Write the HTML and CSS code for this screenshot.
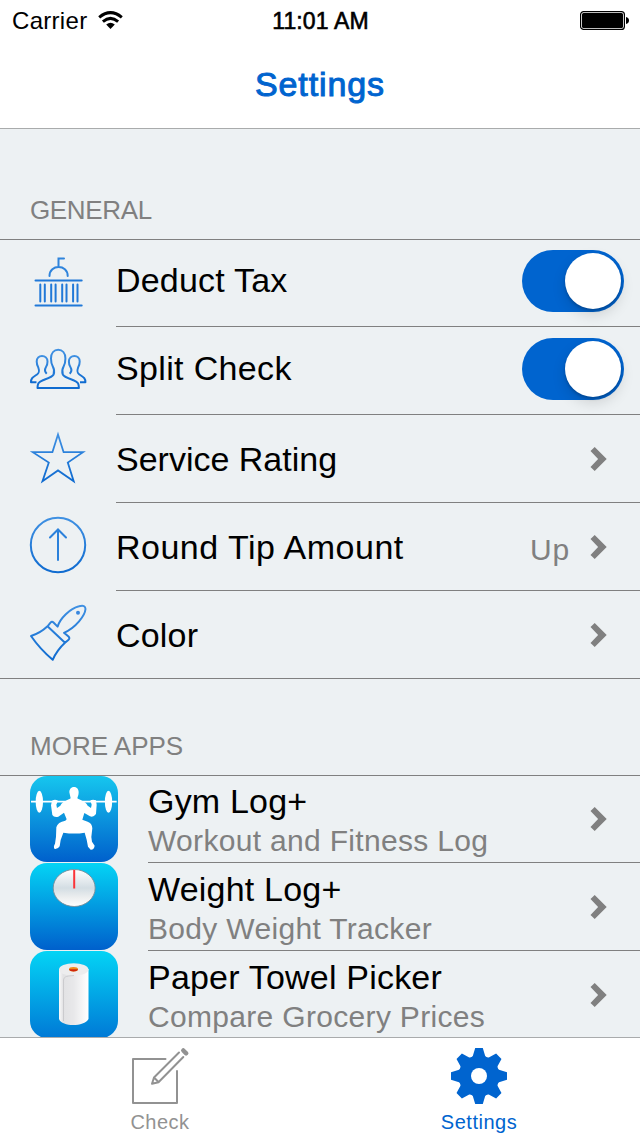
FILE: index.html
```html
<!DOCTYPE html>
<html lang="en">
<head>
<meta charset="utf-8">
<title>Settings</title>
<link rel="stylesheet" href="styles.css">
</head>
<body>
<svg class="defs" width="0" height="0">
  <defs>
    <linearGradient id="line" x1="0" y1="0" x2="0" y2="1"><stop offset="0" stop-color="#3f90e2"/><stop offset="1" stop-color="#0f6bd0"/></linearGradient>
    <linearGradient id="sky" x1="0" y1="0" x2="0" y2="1"><stop offset="0" stop-color="#04d4f5"/><stop offset="1" stop-color="#0060cc"/></linearGradient>
    <linearGradient id="gym" x1="0" y1="0" x2="0" y2="1"><stop offset="0" stop-color="#16c6ee"/><stop offset="1" stop-color="#0060cc"/></linearGradient>
    <linearGradient id="towel" x1="0" y1="0" x2="0" y2="1"><stop offset="0" stop-color="#04d4f5"/><stop offset="1" stop-color="#0079d6"/></linearGradient>
    <linearGradient id="dial" x1="0" y1="0" x2="0" y2="1"><stop offset="0" stop-color="#fff"/><stop offset=".5" stop-color="#d3dde3"/><stop offset=".75" stop-color="#eceeef"/><stop offset="1" stop-color="#fff"/></linearGradient>
    <linearGradient id="roll" x1="0" y1="0" x2="1" y2="0"><stop offset="0" stop-color="#fafafa"/><stop offset=".14" stop-color="#e2e2e4"/><stop offset=".5" stop-color="#e8e8ea"/><stop offset="1" stop-color="#fff"/></linearGradient>
    <symbol id="chevron" viewBox="0 0 16 24"><path d="M4.200 0 16.200 12 4.200 24 0 20 7.600 12 0 4Z" fill="#808080"/></symbol>
  </defs>
</svg>
<div class="screen">
  <header class="top">
    <div class="status">
      <div class="carrier"><span>Carrier</span>
        <svg class="wifi" viewBox="0 0 25 18" width="25" height="18"><g fill="none" stroke="#000" stroke-width="3"><path d="M1.200 6.300Q12.500-3 23.800 6.300"/><path d="M4.900 10.600Q12.500 4.200 20.100 10.600"/></g><path d="M8.200 13.600Q12.500 10 16.800 13.600L12.500 18Z"/></svg>
      </div>
      <div class="clock">11:01 AM</div>
      <svg class="battery" viewBox="0 0 50 20" width="50" height="20"><rect x=".6" y=".6" width="43.800" height="17.800" rx="3" fill="none" stroke="#000" stroke-width="1.200"/><rect x="2" y="2" width="41" height="15" rx="1.500"/><path d="M46 6c4 .5 4 6.500 0 7Z"/></svg>
    </div>
    <h1 class="title">Settings</h1>
  </header>

  <main class="content">
    <h2 class="heading general">GENERAL</h2>
    <ul class="list">
      <li class="row row-first">
        <svg class="icon" viewBox="28 240 60 86"><g fill="none" stroke-width="2" stroke-linecap="round"><path stroke="#2f84dc" d="M58.500 266.500V258.500H64M49.500 276C49.500 264 67.700 264 67.700 276"/><path stroke="#2179d8" d="M35.500 280.500H81.700M40.300 284.500V301.500M44.800 284.500V301.500M51.200 284.500V301.500M55.600 284.500V301.500M62.200 284.500V301.500M66.500 284.500V301.500M73.100 284.500V301.500M77.500 284.500V301.500M35.500 305.600H81.700"/></g></svg>
        <div class="cell"><span class="label">Deduct Tax</span><span class="switch"><i class="knob"></i></span></div>
      </li>
      <li class="row row-second">
        <svg class="icon" viewBox="28 327 60 86"><g fill="none" stroke="url(#line)" stroke-width="2" stroke-linejoin="round"><path d="M53.600 374.500C54.600 371.500 54.300 369 52.800 366.500C51 363.500 51 361.500 51 358.500C51 353 54 349.800 58.200 349.800S65.400 353 65.400 358.500C65.400 361.500 65.400 363.500 63.600 366.500C62.100 369 61.800 371.500 62.800 374.500C64 377 69 378.500 73.500 380.200C78.500 382.200 78.700 384 78.900 388H37.500C37.700 384 37.900 382.200 42.900 380.200C47.400 378.500 52.400 377 53.600 374.500Z"/><path d="M46.700 373.700C44.500 371.500 44.800 369 46 367C47.500 365 47.500 362.500 47.500 361.500C47.500 358 45 356 42 356S36.700 358 36.700 361.500C36.700 364 37 365.500 38.300 367.500C39.500 371 39.500 372.500 37 374.500C33.500 377 31 377.500 31 382.200H36.500"/><path d="M69.700 373.700C71.900 371.500 71.600 369 70.400 367C68.900 365 68.900 362.500 68.900 361.500C68.900 358 71.400 356 74.400 356S79.700 358 79.700 361.500C79.700 364 79.400 365.500 78.100 367.500C76.900 371 76.900 372.500 79.400 374.500C82.900 377 85.400 377.500 85.400 382.200H80"/></g></svg>
        <div class="cell"><span class="label split">Split Check</span><span class="switch"><i class="knob"></i></span></div>
      </li>
      <li class="row">
        <svg class="icon" viewBox="28 415 60 86"><path d="M58 434.500 63.600 452.200H83L67.800 462.600 73.700 481.300 58 470.400 42.500 481.300 48.800 462.600 32.800 452.200H52.400Z" fill="none" stroke="url(#line)" stroke-width="1.800"/></svg>
        <div class="cell"><span class="label plain">Service Rating</span><svg class="chevron"><use href="#chevron"/></svg></div>
      </li>
      <li class="row">
        <svg class="icon" viewBox="28 503 60 86"><g fill="none" stroke="url(#line)" stroke-width="2"><circle cx="58" cy="545" r="27.200"/><path stroke="#2b81db" stroke-linecap="round" d="M50 537.500 58 529.500 66 537.500M58 530V560"/></g></svg>
        <div class="cell"><span class="label wide">Round Tip Amount</span><span class="value">Up</span><svg class="chevron"><use href="#chevron"/></svg></div>
      </li>
      <li class="row row-last">
        <svg class="icon" viewBox="28 591 60 86"><g fill="none" stroke="url(#line)" stroke-width="2" stroke-linejoin="round"><path d="M31 636Q40.500 633 47.500 626.300L65 642.700Q57 650 52.700 659.800Q40 649 31 636ZM47.500 626.300L50.500 622.600Q52 621 53.500 622.500L57.600 626.600C60 618.500 70 608.500 79 606.300Q85.500 604.500 85.500 609C85 615.500 76 627.500 64 632.800L68.500 636.500Q70.300 638.300 68.300 640L65 642.700"/></g><circle cx="78" cy="612.800" r="2" fill="#3887de"/></svg>
        <div class="cell"><span class="label">Color</span><svg class="chevron"><use href="#chevron"/></svg></div>
      </li>
    </ul>

    <h2 class="heading more">MORE APPS</h2>
    <ul class="list apps">
      <li class="row app app-first">
        <svg class="app-icon" viewBox="90 33 264 258" preserveAspectRatio="none"><rect x="90" y="33" width="264" height="258" rx="51" fill="url(#gym)"/><g fill="#fff"><path d="M93 107.500H350V112.500H93Z"/><ellipse cx="118" cy="110" rx="11" ry="33"/><ellipse cx="325.500" cy="110" rx="11" ry="33"/><path d="M208 82C208 61 236 61 236 82C236 92 233 95 232 100C240 106 256 108 263 122L273 129 275 119 271 106Q279 102 288 106L290 119 288 147Q280 158 270 154L253 144 247 164 263 170Q276 174 277 190L274 216 276 230 284 242Q282 255 272 254L264 245 260 224 254 203Q224 208 190 203L182 225 179 244Q174 253 164 252Q159 246 165 236L168 215 169 187Q173 171 196 167L200 163 192 143 175 155Q162 158 157 150L153 121 156 107Q165 102 174 107L169 119 171 129 181 122C188 108 204 106 212 100Z"/></g></svg>
        <div class="cell"><div class="texts"><span class="label">Gym Log+</span><span class="sub">Workout and Fitness Log</span></div><svg class="chevron"><use href="#chevron"/></svg></div>
      </li>
      <li class="row app">
        <svg class="app-icon" viewBox="0 0 88 87"><rect width="88" height="87" rx="17" fill="url(#sky)"/><ellipse cx="44.200" cy="25" rx="21" ry="18.500" fill="url(#dial)" stroke="#7b8d98" stroke-width=".9"/><path d="M44.200 7V25.500" stroke="#fb3439" stroke-width="2"/></svg>
        <div class="cell"><div class="texts"><span class="label">Weight Log+</span><span class="sub">Body Weight Tracker</span></div><svg class="chevron"><use href="#chevron"/></svg></div>
      </li>
      <li class="row app">
        <svg class="app-icon" viewBox="0 0 88 87"><rect width="88" height="87" rx="17" fill="url(#towel)"/><path d="M29 18V68C32 76 54 76 58.500 68V18Z" fill="url(#roll)"/><ellipse cx="43.700" cy="18.500" rx="14.700" ry="6.200" fill="#ededee"/><path d="M33.500 70V29C34 25 38 25 44 24.500" fill="none" stroke="#c5c5c8" stroke-width=".8"/><ellipse cx="43.500" cy="18.300" rx="4.500" ry="2.200" fill="#f28a19"/><path d="M39 18.300C40 21.200 47 21.200 48 18.300Z" fill="#cf260c"/></svg>
        <div class="cell"><div class="texts"><span class="label">Paper Towel Picker</span><span class="sub">Compare Grocery Prices</span></div><svg class="chevron"><use href="#chevron"/></svg></div>
      </li>
    </ul>
  </main>

  <nav class="tabs">
    <div class="tab">
      <svg class="tab-icon" viewBox="129 1046 62 60"><g fill="none" stroke="#929292" stroke-width="2" stroke-linecap="round" stroke-linejoin="round"><path d="M165.500 1059H133V1103H177V1071M179 1052.500 154 1077.500 152 1083.700 158.500 1082.300 183.300 1057M154.500 1078 158 1081.500"/><path d="M183.300 1050.500 186.200 1053.300" stroke-width="4.500"/></g></svg>
      <span>Check</span>
    </div>
    <div class="tab active">
      <svg class="tab-icon" viewBox="-31 -30 62 60"><defs><path id="tooth" d="M-8-18.500-6.200-20-3.800-28H3.800L6.200-20 8-18.500V18.500L6.200 20 3.800 28H-3.800L-6.200 20-8 18.500Z"/></defs><mask id="hole"><rect x="-30" y="-30" width="60" height="60" fill="#fff"/><circle r="8" fill="#000"/></mask><g fill="#0064cf" mask="url(#hole)"><circle r="20"/><use href="#tooth"/><use href="#tooth" transform="rotate(45)"/><use href="#tooth" transform="rotate(90)"/><use href="#tooth" transform="rotate(135)"/></g></svg>
      <span>Settings</span>
    </div>
  </nav>
</div>
</body>
</html>
```

FILE: styles.css
```css
* { box-sizing: border-box; }
body {
  margin: 0;
  font-family: "Liberation Sans", Arial, sans-serif;
  color: #000;
}
h1, h2, ul { margin: 0; padding: 0; font-weight: 400; list-style: none; }
svg { display: block; flex: none; }
.defs { position: absolute; }
.screen {
  display: flex;
  flex-direction: column;
  width: 640px;
  height: 1136px;
  overflow: hidden;
  background: #edf1f3;
}
.top { height: 129px; flex: none; background: #fff; border-bottom: 1px solid #a9abac; }
.status {
  display: grid;
  grid-template-columns: 1fr auto 1fr;
  height: 40px;
  padding: 8px 11px 0 12px;
  font-size: 24px;
  line-height: 26px;
}
.carrier { display: flex; gap: 11px; letter-spacing: .3px; }
.wifi { margin-top: 3px; }
.clock { -webkit-text-stroke: .6px #000; font-size: 23px; letter-spacing: .15px; }
.battery { justify-self: end; margin: 3px -1px 0 0; }
.title {
  padding-top: 24px;
  color: #0064cf;
  font-size: 34px;
  line-height: 40px;
  letter-spacing: .9px;
  text-align: center;
  -webkit-text-stroke: 1px #0064cf;
}
.content { flex: 1; min-height: 0; overflow: hidden; }
.heading {
  height: 110px;
  padding: 66px 0 0 30px;
  color: #808080;
  font-size: 26px;
  line-height: 30px;
}
.heading.general { letter-spacing: -.35px; }
.heading.more { height: 96px; padding-top: 52px; }
.list { border-top: 1px solid #808080; }
.row { display: flex; height: 88px; padding-left: 28px; }
.row-first, .app-first { height: 87px; }
.icon { width: 60px; height: 86px; margin-right: 28px; }
.cell {
  display: flex;
  flex: 1;
  padding: 24px 34px 0 0;
  border-bottom: 1px solid #808080;
}
.row-first .cell { padding: 10px 16px 0 0; }
.row-second .cell { padding: 11px 16px 0 0; }
.row-first .label, .row-second .label { margin-top: 10px; }
.row-last { border-bottom: 1px solid #808080; }
.row-last .cell { border: 0; }
.label { flex: 1; font-size: 34px; line-height: 40px; letter-spacing: .2px; white-space: nowrap; }
.split { letter-spacing: .35px; }
.plain { letter-spacing: 0; }
.wide { letter-spacing: .5px; }
.chevron { width: 17px; height: 24px; margin: 8px -1px 0 20px; }
.value { margin-top: 5px; color: #808080; font-size: 30px; line-height: 36px; letter-spacing: .8px; }
.switch {
  width: 102px;
  height: 62px;
  padding: 3px;
  border-radius: 31px;
  background: #0064cf;
}
.knob {
  display: block;
  width: 56px;
  height: 56px;
  margin-left: auto;
  border-radius: 50%;
  background: #fff;
  box-shadow: 0 6px 14px rgba(0, 0, 0, .13), 0 2px 3px rgba(0, 0, 0, .2);
}
.app { padding-left: 30px; }
.app-icon { width: 88px; height: 87px; margin-right: 30px; }
.app-first .app-icon { height: 86px; }
.app .cell { padding-top: 6px; }
.app-first .cell { padding-top: 5px; }
.app .chevron { margin-top: 26px; }
.texts { display: flex; flex: 1; flex-direction: column; }
.texts .label { flex: none; }
.sub {
  margin-top: 2px;
  color: #808080;
  font-size: 30px;
  line-height: 36px;
  letter-spacing: .32px;
}
.tabs {
  display: grid;
  grid-template-columns: 1fr 1fr;
  flex: none;
  height: 99px;
  border-top: 1px solid #a9abac;
  background: #fff;
}
.tab {
  display: flex;
  flex-direction: column;
  align-items: center;
  padding-top: 8px;
  color: #929292;
  font-size: 20px;
  line-height: 24px;
  letter-spacing: .5px;
}
.tab span { margin-top: 4px; }
.tab.active { color: #0064cf; padding-right: 2px; }
.tab-icon { width: 62px; height: 60px; }
```
